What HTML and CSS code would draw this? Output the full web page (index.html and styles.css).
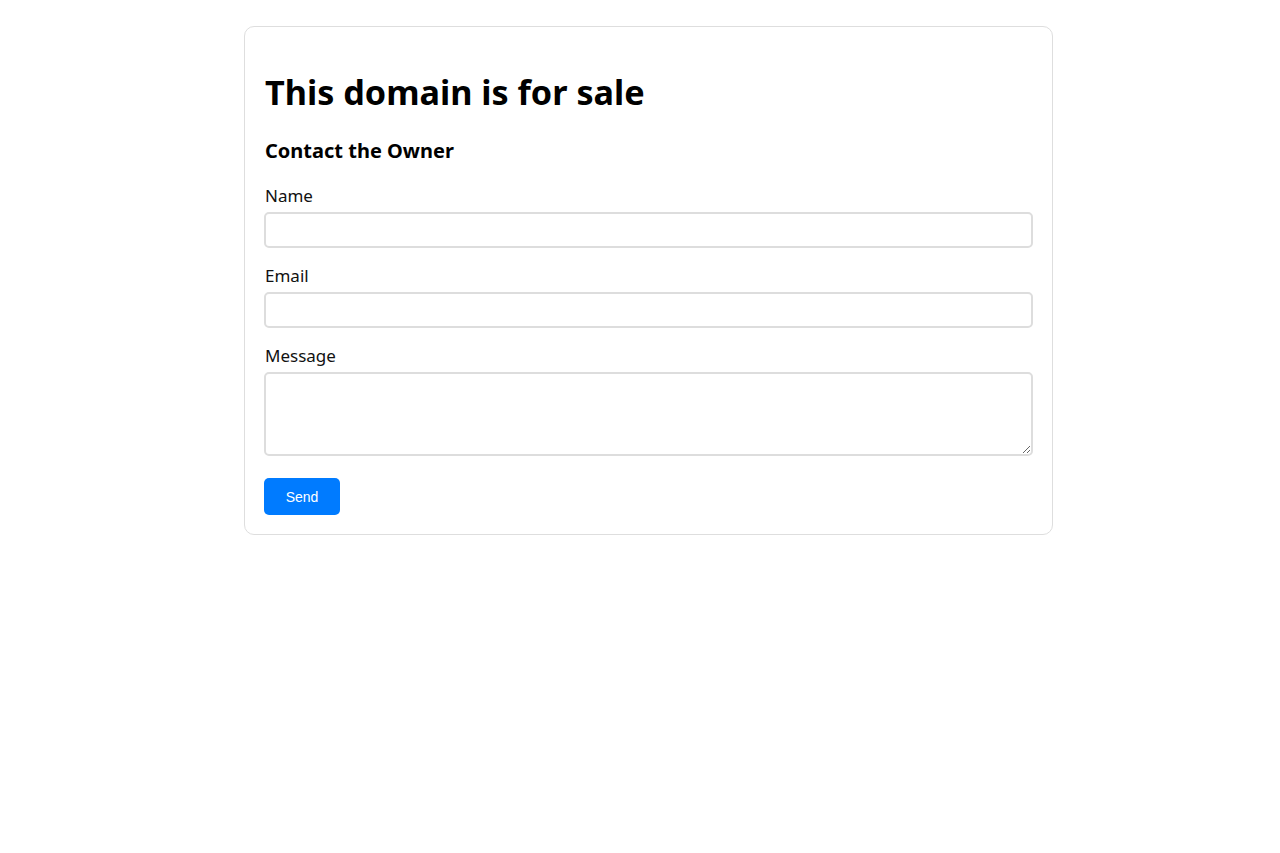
FILE: index.html
```html
<!DOCTYPE html>
<html lang="en">
<head>
<meta charset="utf-8">
<title>This domain is for sale</title>
<link rel="stylesheet" href="styles.css">
</head>
<body>
<div class="card">
  <h1 class="title">This domain is for sale</h1>
  <h2 class="subtitle">Contact the Owner</h2>
  <form class="form">
    <div class="group">
      <label class="label" for="name">Name</label>
      <input class="field" id="name" type="text">
    </div>
    <div class="group">
      <label class="label" for="email">Email</label>
      <input class="field" id="email" type="email">
    </div>
    <div class="group group-last">
      <label class="label" for="message">Message</label>
      <textarea class="field area" id="message"></textarea>
    </div>
    <button class="send" type="button">Send</button>
  </form>
</div>
</body>
</html>
```
FILE: styles.css
```css
html, body {
  margin: 0;
  padding: 0;
  background: #fff;
}
body {
  padding: 26px 0 0 17px;
  font-family: "Noto Sans", "Open Sans", sans-serif;
  color: #000;
}
.card {
  box-sizing: border-box;
  width: 809px;
  margin: 0 auto;
  border: 1px solid #dedede;
  border-radius: 10px;
  padding: 20px 19px 19px 19px;
}
.title {
  font-size: 34.2px;
  font-weight: 700;
  margin: 21px 0 22px 1px;
  line-height: normal;
}
.subtitle {
  font-size: 20px;
  font-weight: 700;
  margin: 0 0 21px 1px;
  line-height: normal;
}
.form {
  margin: 0;
}
.group {
  margin-bottom: 17px;
}
.group-last {
  margin-bottom: 22px;
}
.label {
  display: block;
  font-size: 17px;
  line-height: 22px;
  margin: 0 0 5px 1px;
  color: #111;
}
.field {
  display: block;
  box-sizing: border-box;
  width: 100%;
  height: 36px;
  margin: 0;
  border: 2px solid #dddddd;
  border-radius: 5px;
  padding: 8px;
  font-family: inherit;
  font-size: 14px;
  background: #fff;
}
.area {
  height: 84px;
  resize: vertical;
}
.send {
  display: block;
  box-sizing: border-box;
  height: 37px;
  width: 76px;
  padding: 0;
  border: none;
  border-radius: 5px;
  background: #007bff;
  color: #fff;
  font-family: "Liberation Sans", Arial, sans-serif;
  font-size: 14px;
}
```
